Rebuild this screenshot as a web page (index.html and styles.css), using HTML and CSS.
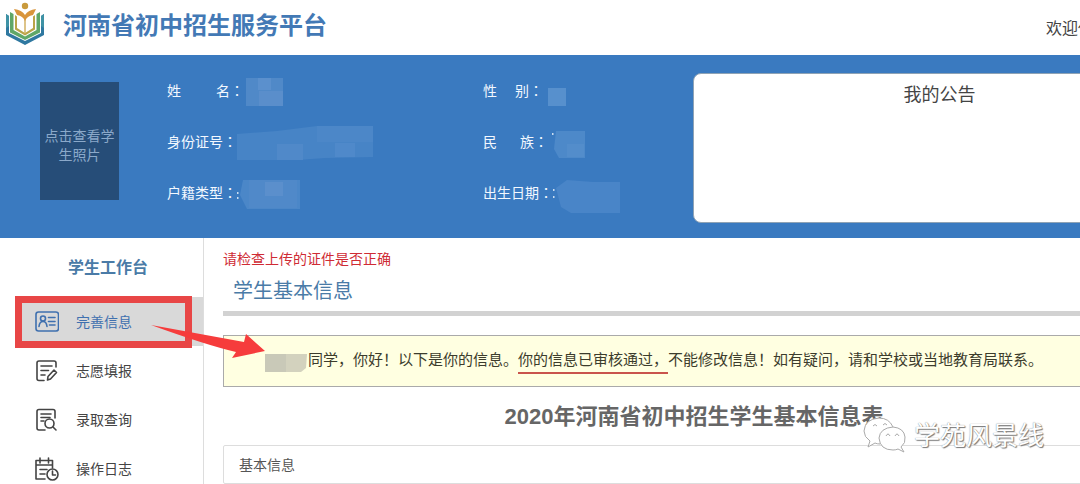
FILE: index.html
```html
<!DOCTYPE html>
<html lang="zh-CN">
<head>
<meta charset="utf-8">
<title>河南省初中招生服务平台</title>
<link rel="stylesheet" href="styles.css">
</head>
<body>
<div class="viewport">
<div class="page">
  <header class="topbar">
    <svg class="logo" viewBox="0 0 40 44" aria-hidden="true">
      <path d="M1 12L4 14V31L20 39L36 31V14L39 12V33L20 43L1 33Z" fill="#2f78a0"/>
      <path d="M1 12L4 14V24L1 26ZM39 12L36 14V24L39 26Z" fill="#3f92a5"/>
      <path d="M5 10L8.500 12V28L20 34.500L31.500 28V12L35 10V30.500L20 38L5 30.500Z" fill="#5fa767"/>
      <path d="M10 13L12 14.500V26L20 31L28 26V14.500L30 13V27.500L20 33.500L10 27.500Z" fill="#b9a447"/>
      <path d="M19.300 15H20.700V32H19.300Z" fill="#cfab58"/>
      <path d="M9 7Q17 8 20 13Q23 8 31 7L28 13Q22 14 20 19Q18 14 12 13Z" fill="#d9953c"/>
      <circle cx="20" cy="4" r="3.200" fill="#c99a3c"/>
    </svg>
    <h1 class="brand">河南省初中招生服务平台</h1>
    <span class="welcome">欢迎你</span>
  </header>

  <section class="profile">
    <button class="photo" type="button">点击查看学生照片</button>
    <dl class="fields">
      <div class="field"><dt><span class="spread spread-wide"><i>姓</i><i>名</i></span><span class="colon">：</span></dt>
        <dd><svg class="mask" width="40" height="30"><path d="M2 1H39V29H2Z" fill="#5089c8"/><path d="M14 1H27V13H14Z" fill="#5b90cd"/><path d="M15 14H39V29H15Z" fill="#5a8ecb"/></svg></dd></div>
      <div class="field"><dt><span class="spread spread-s"><i>性</i><i>别</i></span><span class="colon">：</span></dt>
        <dd><svg class="mask" width="24" height="30"><path d="M5 11H23V29H5Z" fill="#5790cd"/></svg></dd></div>
      <div class="field"><dt><span>身份证号</span><span class="colon">：</span></dt>
        <dd><svg class="mask" width="140" height="36"><path d="M0 9L40 6L80 1H136V32L88 33L60 35H0Z" fill="#4784c6"/><path d="M40 19H66V35H40Z" fill="#5089c9"/><path d="M80 1H136V17H80Z" fill="#4c87c8"/><path d="M98 18H118V32H98Z" fill="#4f89ca"/></svg></dd></div>
      <div class="field"><dt><span class="spread spread-m"><i>民</i><i>族</i></span><span class="colon">：</span></dt>
        <dd><svg class="mask" width="36" height="30"><path d="M4 5h1.500v2H4z" fill="#c9dcef"/><path d="M8 3H37V30H11L6 21Z" fill="#4d89c9"/><path d="M19 16H36V29H19Z" fill="#538dcb"/></svg></dd></div>
      <div class="field"><dt><span>户籍类型</span><span class="colon">：</span></dt>
        <dd><svg class="mask" width="60" height="34"><path d="M0 15h1.500v2H0zM0 20h1.500v2H0z" fill="#c9dcef"/><path d="M6 3H63V32H10L3 18Z" fill="#4b87c8"/><path d="M12 3H60V31H12Z" fill="#5089c9"/><path d="M28 5H46V19H28Z" fill="#5b8fcc"/></svg></dd></div>
      <div class="field"><dt><span>出生日期</span><span class="colon">：</span></dt>
        <dd><svg class="mask" width="74" height="36"><path d="M0 13h1.500v2H0zM0 20h1.500v2H0z" fill="#c9dcef"/><path d="M3 12L14 4L40 6H67V37H18L8 31Z" fill="#4985c8"/></svg></dd></div>
    </dl>
    <aside class="board"><h2>我的公告</h2></aside>
  </section>

  <div class="workspace">
    <nav class="sidebar">
      <h2 class="sidebar-title">学生工作台</h2>
      <a class="item active" href="#info">
        <svg class="icon" viewBox="0 0 24 24"><rect x="1" y="2" width="22.500" height="19" rx="2.500"/><circle cx="8" cy="8.500" r="2.500"/><path d="M4 16.500Q4.500 11.500 8 11.500Q11.500 11.500 12 16.500M13.500 7.500H20M13.500 11.500H20M14.500 15H20"/></svg>
        <span>完善信息</span>
      </a>
      <a class="item" href="#apply">
        <svg class="icon" viewBox="0 0 24 24"><path d="M21 8V4Q21 2 19 2H4Q2 2 2 4V19.500Q2 21.500 4 21.500H9M6 7H17M6 11.500H13.500M6 16H10"/><path d="M12.500 21L13 17.500L19 11L21.500 13.500L15.500 20Z"/></svg>
        <span>志愿填报</span>
      </a>
      <a class="item" href="#result">
        <svg class="icon" viewBox="0 0 24 24"><path d="M10 22H4Q2 22 2 20V3.500Q2 1.500 4 1.500H18Q20 1.500 20 3.500V10M6 6H16M6 9.500H15M6 13H9"/><circle cx="14.500" cy="15.500" r="4.500"/><path d="M18 19L21 22"/></svg>
        <span>录取查询</span>
      </a>
      <a class="item" href="#log">
        <svg class="icon" viewBox="0 0 24 24"><path d="M10 22H1V3.500H17.500V11M1 8H17.500M5 1V6M13.500 1V6M5 12.500H12M5 17H10"/><circle cx="17.500" cy="17.500" r="5.500"/><path d="M17.500 14V18H20.500"/></svg>
        <span>操作日志</span>
      </a>
    </nav>
    <main class="content">
      <p class="warning">请检查上传的证件是否正确</p>
      <h2 class="section-title">学生基本信息</h2>
      <div class="notice"><svg class="name-mask" width="43" height="18"><path d="M0 0H42L41 14L36 18H0Z" fill="#d3d2be"/><path d="M0 0H21V18H0Z" fill="#c9c9b8"/></svg><p>同学，你好！以下是你的信息。<em>你的信息已审核通过，</em>不能修改信息！如有疑问，请和学校或当地教育局联系。</p></div>
      <h3 class="form-title">2020年河南省初中招生学生基本信息表</h3>
      <div class="panel">基本信息</div>
    </main>
  </div>
  <div class="highlight"></div>
  <svg class="arrow" width="114" height="40" viewBox="0 0 114 40" aria-hidden="true"><path d="M0 3L93 20L95 12L114 29L81 36L85 30Q55 23 0 3Z" fill="#f63c3c"/></svg>
  <div class="watermark">
    <svg width="46" height="40" viewBox="0 0 46 40" aria-hidden="true"><path d="M8 27L6 33L13 29Q15 30 18 30L31 13Q27 4 17 4Q3 5 2 17Q2 23 8 27Z"/><path d="M31 13Q18 14 17 24Q18 36 31 36Q34 36 36 35L42 38L39 33Q44 29 43 23Q42 14 31 13Z"/><path d="M24 22Q26 18 28 22M33 22Q35 18 37 22M11 12Q13 9 15 12M21 11Q23 8 25 11" fill="none"/></svg>
    <span>学苑风景线</span>
  </div>
</div>
</div>
</body>
</html>
```
FILE: styles.css
```css
* { box-sizing: border-box; }
body, h1, h2, h3, p, dl, dd { margin: 0; }
body {
  font-family: "Noto Sans CJK SC", sans-serif;
  font-size: 14px;
  line-height: 20px;
  color: #444;
  background: #fff;
}
i, em { font-style: normal; }
.viewport { height: 100vh; overflow: hidden; }
/* the page is laid out wider than its window */
.page { position: relative; width: 110%; }

.topbar {
  display: flex;
  align-items: center;
  height: 55px;
  padding: 0 94px 8px 5px;
}
.logo { width: 40px; height: 44px; }
.brand {
  margin-left: 18px;
  font-size: 24px;
  line-height: 32px;
  font-weight: 700;
  color: #4379b5;
}
.welcome { margin-left: auto; padding-top: 6px; font-size: 16px; }

.profile {
  display: flex;
  align-items: flex-start;
  height: 183px;
  padding-left: 40px;
  background: #3a7ac0;
}
.photo {
  flex: none;
  width: 79px;
  height: 118px;
  margin-top: 27px;
  padding: 8px 4px 0;
  border: 0;
  background: #264d78;
  color: #8ba9ca;
  font: inherit;
  line-height: 19px;
}
.fields {
  display: grid;
  grid-template-columns: 316px 210px;
  grid-auto-rows: 51px;
  padding: 11px 0 0 48px;
  color: #f2f8ff;
}
.field { display: flex; align-items: center; }
.field dt { display: flex; padding-bottom: 3px; }
.spread { display: flex; justify-content: space-between; }
.spread-wide { width: 63px; }
.spread-s { width: 46px; }
.spread-m { width: 51px; }
.colon { width: 14px; font-family: "Noto Sans CJK TC", sans-serif; }
.mask { display: block; overflow: visible; }
.board {
  flex: 1;
  height: 150px;
  margin: 18px 2px 0 0;
  border: 1px solid #8fa3b5;
  border-radius: 8px;
  background: #fff;
  text-align: center;
}
.board h2 { padding-top: 7px; font-size: 18px; line-height: 24px; font-weight: 400; }

.workspace { display: flex; }
.sidebar {
  flex: none;
  width: 204px;
  padding: 16px 0 0 15px;
  border-right: 1px solid #ddd;
}
.sidebar-title {
  padding: 0 0 19px 53px;
  font-size: 16px;
  line-height: 24px;
  color: #4a7ba7;
}
.item {
  display: flex;
  align-items: center;
  gap: 17px;
  height: 49px;
  padding-left: 20px;
  color: #444;
  text-decoration: none;
}
.item span { padding-bottom: 2px; }
.item.active { background: #d9d9d9; color: #3f70af; }
.icon {
  width: 24px;
  height: 24px;
  fill: none;
  stroke: currentColor;
  stroke-width: 1.6;
  stroke-linecap: round;
  stroke-linejoin: round;
}

.content { flex: 1; min-width: 0; padding: 10px 23px 0 19px; }
.warning { color: #cf2b34; }
.section-title {
  padding: 9px 10px 8px;
  border-bottom: 5px solid #d2d2d2;
  font-size: 20px;
  line-height: 26px;
  font-weight: 400;
  color: #4a7ba7;
}
.notice {
  display: flex;
  align-items: center;
  height: 52px;
  margin-top: 19px;
  padding: 0 41px 4px;
  border: 1px solid #aaa;
  background: #ffffe1;
  font-size: 15px;
  color: #3c3c2c;
  white-space: nowrap;
}
.name-mask { flex: none; margin-top: 8px; }
.notice em { padding-bottom: 3px; border-bottom: 2px solid #c9544c; }
.form-title {
  padding: 15px 0 13px;
  font-family: "Liberation Sans", "Noto Sans CJK SC", sans-serif;
  font-size: 22px;
  line-height: 30px;
  text-align: center;
  color: #666;
}
.panel {
  padding: 8px 15px 9px;
  border: 1px solid #ddd;
  border-radius: 2px;
  color: #555;
}

.highlight {
  position: absolute;
  left: 15px;
  top: 296px;
  width: 177px;
  height: 52px;
  border: 7px solid #e84646;
}
.arrow { position: absolute; left: 151px; top: 322px; }
.watermark {
  position: absolute;
  left: 862px;
  top: 414px;
  display: flex;
  align-items: center;
  gap: 6px;
  font-size: 26px;
  line-height: 40px;
  color: #fff;
  text-shadow: 1px 1px 1px #777, 0 0 1px #777;
}
.watermark svg { fill: #fff; stroke: #aaa; stroke-width: 1; }
```
